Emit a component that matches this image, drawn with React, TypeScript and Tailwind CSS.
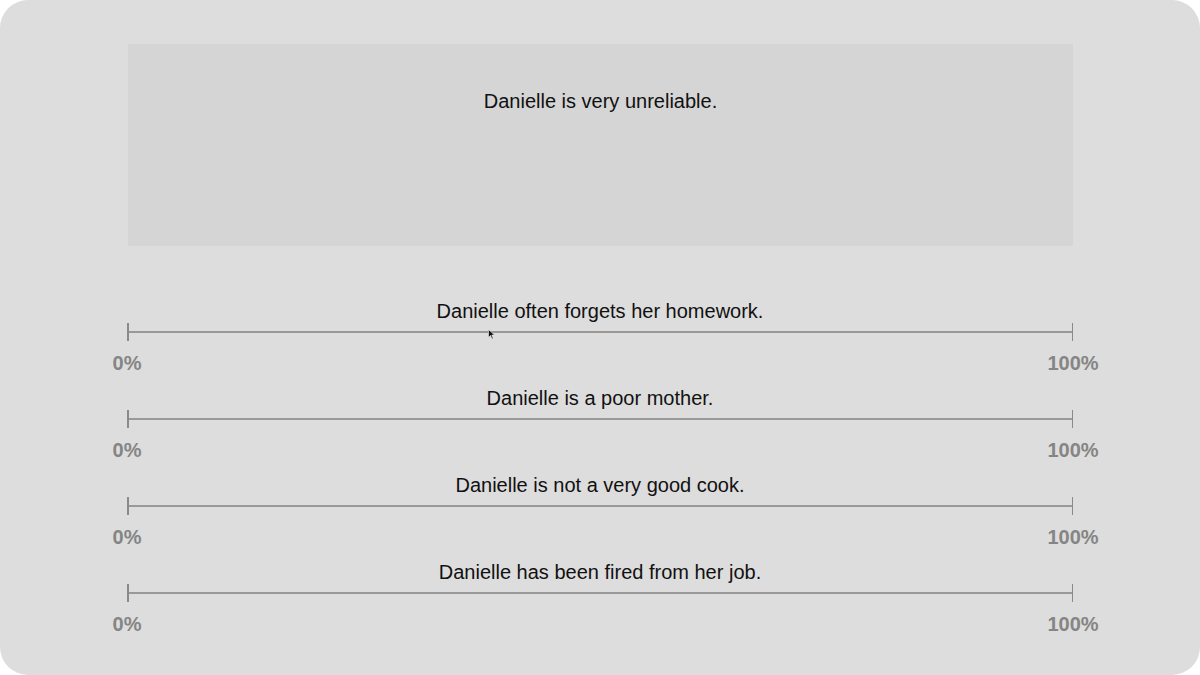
const statements = [
  "Danielle often forgets her homework.",
  "Danielle is a poor mother.",
  "Danielle is not a very good cook.",
  "Danielle has been fired from her job.",
]

function Scale({ text }: { text: string }) {
  return (
    <div className="flex flex-col">
      <p className="text-center text-[20px] leading-[24px] text-[#111]">{text}</p>
      <div className="relative h-[18px] flex items-center">
        <div className="w-[1.5px] h-full bg-[#8a8a8a]"></div>
        <div className="flex-1 h-[2px] bg-[#999]"></div>
        <div className="w-[1.5px] h-full bg-[#8a8a8a]"></div>
      </div>
      <div className="flex justify-between -mx-[30px] mt-[10px]">
        <span className="w-[60px] text-center text-[20px] leading-[24px] font-bold text-[#858585]">0%</span>
        <span className="w-[60px] text-center text-[20px] leading-[24px] font-bold text-[#858585]">100%</span>
      </div>
    </div>
  )
}

export default function App() {
  return (
    <div className="w-[1200px] h-[675px] bg-white" style={{ fontFamily: '"Liberation Sans", Arial, sans-serif' }}>
      <div className="relative w-full h-full rounded-[28px] bg-[#dddddd] pt-[44px] pl-[127px] pr-[127px]">
        {/* top statement box */}
        <div className="h-[202px] bg-[#d5d5d5] pt-[43px] ml-px">
          <p className="text-center text-[20px] leading-[28px] text-[#111]">Danielle is very unreliable.</p>
        </div>

        <div className="flex flex-col gap-[11px] mt-[53px]">
          {statements.map((s) => (
            <Scale key={s} text={s} />
          ))}
        </div>

        {/* mouse pointer */}
        <svg className="absolute left-[488px] top-[329px]" width="7" height="11" viewBox="0 0 7 11">
          <path d="M0.5 0.5 L0.5 8.5 L2.5 6.5 L4 10 L5.2 9.4 L3.8 6.1 L6.5 6.1 Z" fill="#111" stroke="#eee" strokeWidth="0.6" />
        </svg>
      </div>
    </div>
  )
}
